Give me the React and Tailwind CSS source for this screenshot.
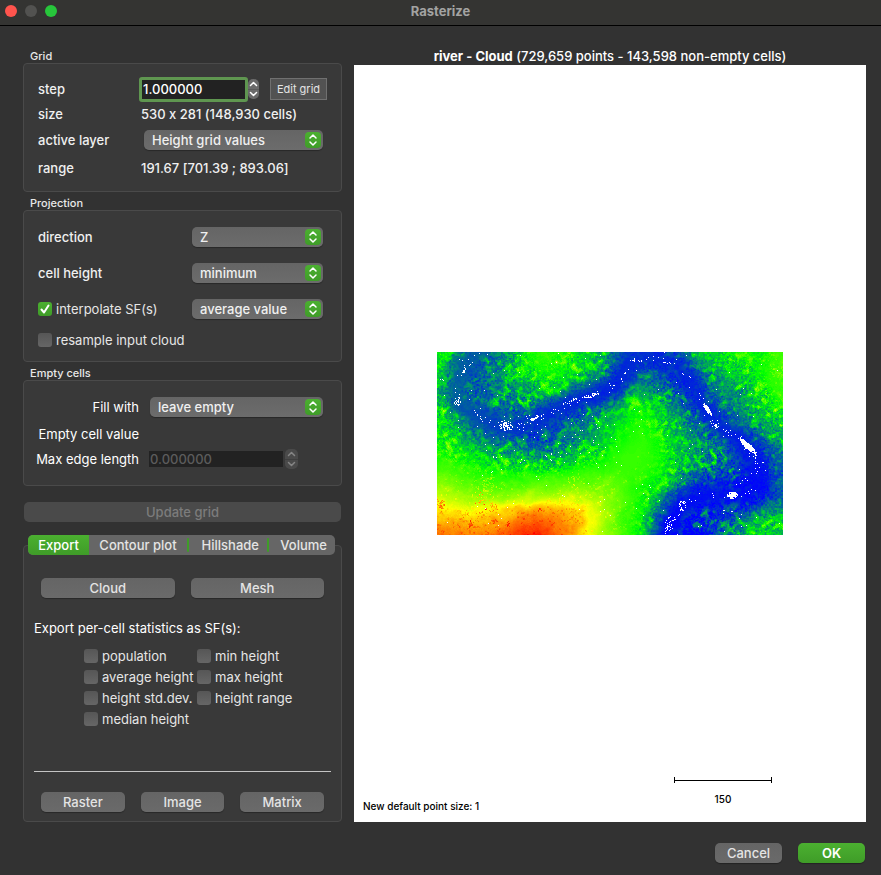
import React, { useId, useMemo, useState } from "react";

/* ---------- Height map ---------- */

const MAP_W = 346;
const MAP_H = 183;
const STEP = 20;

// Coarse terrain heights, one sample every 20 cells: 0 blue, 33 green, 66 yellow, 100 red.
const HEIGHTS = [
  [31, 21, 13, 18, 28, 38, 36, 31, 26, 16, 9, 6, 13, 26, 31, 36, 34, 40, 40],
  [29, 15, 13, 19, 28, 34, 34, 30, 23, 14, 14, 13, 8, 17, 23, 29, 33, 40, 40],
  [26, 16, 14, 17, 20, 25, 25, 20, 16, 14, 26, 19, 13, 12, 20, 22, 29, 37, 38],
  [30, 21, 15, 16, 16, 16, 15, 15, 20, 26, 34, 28, 20, 12, 13, 20, 25, 32, 32],
  [33, 27, 18, 14, 12, 11, 14, 18, 24, 31, 37, 33, 25, 17, 14, 14, 17, 24, 24],
  [35, 34, 29, 24, 22, 18, 20, 26, 30, 37, 40, 36, 28, 21, 17, 12, 10, 17, 18],
  [44, 42, 38, 35, 35, 35, 36, 38, 40, 41, 39, 34, 26, 15, 11, 9, 6, 15, 16],
  [55, 52, 48, 47, 49, 51, 53, 52, 50, 46, 36, 29, 15, 10, 7, 5, 4, 13, 14],
  [71, 69, 68, 71, 76, 78, 77, 72, 60, 44, 36, 22, 9, 5, 7, 11, 19, 22, 24],
  [84, 82, 82, 84, 92, 94, 86, 76, 59, 44, 34, 15, 3, 3, 9, 20, 29, 28, 28],
  [86, 84, 84, 86, 94, 95, 88, 76, 58, 44, 34, 13, 1, 3, 10, 21, 30, 28, 28],
];

// River bed: x, y, height of the bed, half width.
const RIVER = [
  [42, -2, 12, 12], [25, 18, 12, 11], [18, 36, 13, 10], [22, 52, 11, 10], [38, 62, 9, 13],
  [56, 71, 8, 14], [72, 75, 7, 14], [92, 72, 6, 14], [110, 61, 5, 14], [130, 52, 4, 13],
  [155, 44, 3, 13], [172, 37, 4, 14], [184, 26, 4, 14], [191, 12, 5, 14], [204, 6, 5, 14],
  [221, 5, 5, 15], [238, 13, 4, 14], [251, 27, 4, 14], [261, 43, 4, 13], [271, 60, 4, 12],
  [285, 76, 4, 12], [301, 86, 3, 13], [314, 102, 3, 15], [320, 116, 2, 17], [320, 132, 1, 17],
  [310, 142, 1, 14], [295, 143, 1, 14], [271, 142, 2, 13], [248, 152, 1, 15], [236, 164, 0, 15],
  [229, 186, 0, 14],
];

// Tall vegetation: x, y, radius, extra height, density.
const CLUMPS = [
  [3, 151, 6, 22, 0.5], [44, 147, 8, 20, 0.28], [54, 154, 7, 18, 0.3], [33, 172, 3, 16, 0.6],
  [70, 172, 3, 16, 0.5], [102, 156, 3, 18, 0.5], [57, 168, 4, 14, 0.35], [50, 134, 12, 12, 0.32],
  [138, 126, 8, 14, 0.3], [24, 130, 5, 12, 0.25], [150, 100, 14, 12, 0.2], [40, 160, 12, 16, 0.14],
  [212, 70, 5, 8, 0.5], [330, 42, 5, 8, 0.5], [340, 18, 7, 8, 0.5], [128, 158, 16, 7, 0.2],
];

// Cells without points: x, y, half length, half thickness, angle, density.
const GAPS = [
  [270, 57, 8, 2, 0.95, 1], [310, 93, 12, 3, 0.72, 0.9], [317, 101, 4, 1, 0.9, 0.8],
  [295, 143, 6, 4, 0, 0.8], [245, 153, 4, 6, 0, 0.35], [20, 49, 4, 5, 0, 0.4],
  [68, 73, 8, 5, 0.2, 0.45], [97, 66, 7, 2, -0.5, 0.7], [137, 47, 4, 2, 0, 0.5],
  [155, 43, 9, 2, -0.25, 0.5], [197, 8, 1, 2, 0, 0.9], [278, 73, 7, 3, 0.8, 0.25],
  [325, 110, 2, 1, 0, 0.8], [231, 172, 4, 9, 0.2, 0.18], [28, 17, 12, 1, -0.9, 0.3],
];

function hash(x, y, seed) {
  let h = Math.imul(x, 374761393) + Math.imul(y, 668265263) + Math.imul(seed, 362437);
  h = Math.imul(h ^ (h >>> 13), 1274126177);
  h = Math.imul(h ^ (h >>> 15), 2246822519);
  return ((h ^ (h >>> 16)) >>> 0) / 4294967296;
}

const ease = (t) => t * t * (3 - 2 * t);
const mix = (a, b, t) => a + (b - a) * t;

function smoothNoise(x, y, size, seed) {
  const rx = x * 0.82 - y * 0.57 + 400;
  const ry = x * 0.57 + y * 0.82 + 400;
  const gx = Math.floor(rx / size);
  const gy = Math.floor(ry / size);
  const fx = ease(rx / size - gx);
  const fy = ease(ry / size - gy);
  return mix(
    mix(hash(gx, gy, seed), hash(gx + 1, gy, seed), fx),
    mix(hash(gx, gy + 1, seed), hash(gx + 1, gy + 1, seed), fx),
    fy
  );
}

function cubic(a, b, c, d, t) {
  return b + 0.5 * t * (c - a + t * (2 * a - 5 * b + 4 * c - d + t * (3 * (b - c) + d - a)));
}

function sample(row, x) {
  const i = Math.floor(x);
  const at = (k) => row[Math.max(0, Math.min(row.length - 1, k))];
  return cubic(at(i - 1), at(i), at(i + 1), at(i + 2), x - i);
}

function terrain(x, y) {
  const gy = y / STEP;
  const i = Math.floor(gy);
  const at = (k) => sample(HEIGHTS[Math.max(0, Math.min(HEIGHTS.length - 1, k))], x / STEP);
  return cubic(at(i - 1), at(i), at(i + 1), at(i + 2), gy - i);
}

function river(x, y) {
  let best = { d: Infinity, bed: 0, width: 1 };
  for (let i = 0; i < RIVER.length - 1; i++) {
    const [ax, ay, ab, aw] = RIVER[i];
    const [bx, by, bb, bw] = RIVER[i + 1];
    const dx = bx - ax;
    const dy = by - ay;
    const t = Math.max(0, Math.min(1, ((x - ax) * dx + (y - ay) * dy) / (dx * dx + dy * dy)));
    const d = Math.hypot(x - ax - dx * t, y - ay - dy * t);
    if (d < best.d) best = { d, bed: mix(ab, bb, t), width: mix(aw, bw, t) };
  }
  return best;
}

function isGap(x, y, riverDistance) {
  for (const [cx, cy, a, b, angle, density] of GAPS) {
    const dx = x - cx;
    const dy = y - cy;
    const u = (dx * Math.cos(angle) + dy * Math.sin(angle)) / a;
    const v = (-dx * Math.sin(angle) + dy * Math.cos(angle)) / b;
    const q = u * u + v * v;
    if (q < 1 && hash(x, y, 70) < density * (1.4 - q)) return true;
  }
  if (riverDistance < 3 && hash(x, y, 80) < 0.05) return true;
  const belt = y > 60 && y < 112 && x > 40 && x < 180 ? 0.011 : 0.003;
  return hash(x, y, 90) < belt;
}

function heightAt(x, y, r) {
  const wx = x + (smoothNoise(x, y, 9, 21) - 0.5) * 6;
  const wy = y + (smoothNoise(x, y, 9, 22) - 0.5) * 6;
  let h = terrain(wx, wy);
  const wobble = 0.8 + 0.4 * smoothNoise(x, y, 12, 23);
  const pull = Math.exp(-Math.pow(r.d / (r.width * wobble), 2));
  h = mix(h, Math.min(h, r.bed), pull * 0.9);

  const plateau = Math.exp(-(Math.pow((x - 198) / 28, 2) + Math.pow((y - 96) / 44, 2)));
  const slope = h > 32 ? Math.max(0.18, 1 - (h - 32) / 8) : 1;
  const rough = slope * (1 - 0.8 * plateau) * (1 - 0.85 * pull);
  const trees = Math.max(0, smoothNoise(x, y, 4, 1) - 0.52) * 2;
  const patches = smoothNoise(x, y, 14, 2);
  h += (trees * (0.4 + patches) - 0.12) * 22 * rough;
  h += (hash(x >> 1, y >> 1, 3) - 0.5) * 9 * rough;
  h += (hash(x, y, 4) - 0.5) * 10 * rough * (0.4 + patches);
  if (h > 32 && hash(x >> 1, y >> 1, 5) < 0.09 * (1 - plateau) * patches * 2) h += 8 * hash(x, y, 6);

  for (const [cx, cy, radius, extra, density] of CLUMPS) {
    const d = Math.hypot(x - cx, y - cy) / radius;
    if (d < 1.4 && hash(x >> 1, y >> 1, 11) * 0.6 + hash(x, y, 12) * 0.4 < density * (1.5 - d)) {
      h += extra * (0.5 + 0.5 * hash(x, y, 13));
    }
  }
  return Math.max(0, Math.min(100, h));
}

function ramp(t) {
  const c = (v) => Math.round(Math.max(0, Math.min(1, v)) * 255);
  if (t < 33) return `rgb(0,${c(t / 33)},${c(1 - t / 33)})`;
  if (t < 66) return `rgb(${c((t - 33) / 33)},255,0)`;
  return `rgb(255,${c(1 - (t - 66) / 34)},0)`;
}

function buildLayers() {
  const layers = new Map();
  for (let y = 0; y < MAP_H; y++) {
    let start = 0;
    let current = null;
    for (let x = 0; x <= MAP_W; x++) {
      let level = null;
      if (x < MAP_W) {
        const r = river(x, y);
        level = isGap(x, y, r.d) ? -1 : Math.round(heightAt(x, y, r));
      }
      if (level !== current) {
        if (current !== null && current !== -1) {
          if (!layers.has(current)) layers.set(current, []);
          layers.get(current).push(`M${start} ${y}h${x - start}v1h${start - x}z`);
        }
        current = level;
        start = x;
      }
    }
  }
  return [...layers].map(([level, runs]) => ({ level, d: runs.join("") }));
}

function HeightMap() {
  const layers = useMemo(buildLayers, []);
  return (
    <svg
      width={MAP_W}
      height={MAP_H}
      viewBox={`0 0 ${MAP_W} ${MAP_H}`}
      shapeRendering="crispEdges"
      role="img"
      aria-label="Height grid"
    >
      {layers.map(({ level, d }) => (
        <path key={level} d={d} fill={ramp(level)} />
      ))}
    </svg>
  );
}

/* ---------- Controls ---------- */

function Select({ label, value, className = "" }) {
  return (
    <div className={`relative h-5 ${className}`}>
      <select
        aria-label={label}
        defaultValue={value}
        className="block h-5 w-full appearance-none rounded-[5px] bg-linear-to-b from-[#656565] to-[#6c6c6c] pl-2 pr-6 text-[13px] leading-5 font-medium text-[#f0f0f0] shadow-[0_1px_1px_rgba(0,0,0,0.3)] outline-none"
      >
        <option>{value}</option>
      </select>
      <span className="pointer-events-none absolute top-0.5 right-0.5 flex size-4 items-center justify-center rounded-[4px] bg-linear-to-b from-[#4bb030] to-[#3f9c28]">
        <svg width="10" height="14" viewBox="0 0 10 14" fill="none" stroke="#fff" strokeWidth="1.5" strokeLinecap="round" strokeLinejoin="round">
          <path d="M2 5l3-3 3 3M2 9l3 3 3-3" />
        </svg>
      </span>
    </div>
  );
}

function Checkbox({ label, defaultChecked = false }) {
  const id = useId();
  const [checked, setChecked] = useState(defaultChecked);
  return (
    <div className="flex items-center gap-1">
      <span className="relative block size-3.5 shrink-0">
        <input
          id={id}
          type="checkbox"
          checked={checked}
          onChange={(e) => setChecked(e.target.checked)}
          className="block size-3.5 appearance-none rounded-[3px] bg-linear-to-b from-[#565656] to-[#666666] checked:from-[#4bb030] checked:to-[#3f9c28]"
        />
        {checked && (
          <svg className="pointer-events-none absolute inset-0" width="14" height="14" viewBox="0 0 14 14" fill="none" stroke="#fff" strokeWidth="2" strokeLinecap="round" strokeLinejoin="round">
            <path d="M3.500 7.500l2.500 3 4.500-7" />
          </svg>
        )}
      </span>
      <label htmlFor={id} className="font-normal whitespace-nowrap text-[#e6e6e6]">{label}</label>
    </div>
  );
}

function Stepper({ disabled = false, className = "" }) {
  const tone = disabled ? "bg-[#4a4a4a] text-[#858585]" : "bg-[#6a6a6a] text-white";
  return (
    <div className={`flex h-5 flex-col overflow-hidden rounded-[5px] ${tone} ${className}`}>
      <button type="button" aria-label="Increase" disabled={disabled} className="flex flex-1 items-center justify-center">
        <svg width="9" height="6" viewBox="0 0 9 6" fill="none" stroke="currentColor" strokeWidth="1.5" strokeLinecap="round" strokeLinejoin="round">
          <path d="M1.500 4.500l3-3 3 3" />
        </svg>
      </button>
      <button type="button" aria-label="Decrease" disabled={disabled} className="flex flex-1 items-center justify-center border-t border-black/15">
        <svg width="9" height="6" viewBox="0 0 9 6" fill="none" stroke="currentColor" strokeWidth="1.5" strokeLinecap="round" strokeLinejoin="round">
          <path d="M1.500 1.500l3 3 3-3" />
        </svg>
      </button>
    </div>
  );
}

function Button({ children, className = "" }) {
  return (
    <button
      type="button"
      className={`h-5 rounded-[5px] bg-linear-to-b from-[#656565] to-[#6a6a6a] text-[13px] leading-5 font-medium text-[#e4e4e4] shadow-[0_1px_1px_rgba(0,0,0,0.3)] ${className}`}
    >
      {children}
    </button>
  );
}

function Group({ title, children, className = "" }) {
  return (
    <section>
      <h2 className="px-[7px] text-[11px] leading-[14px] font-medium text-[#e8e8e8]">{title}</h2>
      <div className={`rounded-[4px] border border-[#4a4a4a] bg-[#393939] px-3.5 ${className}`}>{children}</div>
    </section>
  );
}

const TABS = [
  { name: "Export", style: "w-[61px]" },
  { name: "Contour plot", style: "w-[98px]" },
  { name: "Hillshade", style: "w-20" },
  { name: "Volume", style: "flex-1" },
];

function Tabs() {
  return (
    <div role="tablist" className="relative mt-[13px] mr-[7px] ml-[5px] flex h-5 overflow-hidden rounded-[5px] bg-[#666666]">
      {TABS.map(({ name, style }, i) => (
        <button
          key={name}
          type="button"
          role="tab"
          aria-selected={i === 0}
          className={`flex items-center justify-center whitespace-nowrap ${style} ${
            i === 0 ? "bg-linear-to-b from-[#4bb030] to-[#3f9c28] text-white" : "text-[#e4e4e4]"
          }`}
        >
          {i > 1 && <span className="mr-auto h-3.5 w-0.5 rounded-full bg-[#3f9c28]" />}
          <span className={i > 1 ? "pr-2" : ""}>{name}</span>
        </button>
      ))}
    </div>
  );
}

/* ---------- Panels ---------- */

function Sidebar() {
  return (
    <div className="flex w-[319px] shrink-0 flex-col gap-1 pt-[23px]">
      <Group title="Grid" className="pt-3 pb-[9px]">
        <div className="flex h-[26px] items-center">
          <label htmlFor="step" className="w-[101px]">step</label>
          <input
            id="step"
            defaultValue="1.000000"
            className="h-[25px] w-[109px] rounded-[3px] border-[3px] border-[#5f9650] bg-[#222222] px-px text-[13px] font-medium text-white outline-none"
          />
          <Stepper className="w-[11px]" />
          <button type="button" className="ml-auto h-[22px] w-[57px] border border-[#707070] bg-[#525252] text-[11px] font-normal whitespace-nowrap text-[#e4e4e4]">
            Edit grid
          </button>
        </div>
        <div className="flex h-6 items-center">
          <span className="w-[103px]">size</span>
          <span>530 x 281 (148,930 cells)</span>
        </div>
        <div className="flex h-7 items-center">
          <span className="w-[106px]">active layer</span>
          <Select label="active layer" value="Height grid values" className="mr-1 flex-1" />
        </div>
        <div className="flex h-7 items-center">
          <span className="w-[103px]">range</span>
          <span>191.67 [701.39 ; 893.06]</span>
        </div>
      </Group>

      <Group title="Projection" className="py-2">
        <div className="flex h-9 items-center justify-between">
          <span>direction</span>
          <Select label="direction" value="Z" className="mr-1 w-[131px]" />
        </div>
        <div className="flex h-9 items-center justify-between">
          <span>cell height</span>
          <Select label="cell height" value="minimum" className="mr-1 w-[131px]" />
        </div>
        <div className="flex h-9 items-center justify-between">
          <Checkbox label="interpolate SF(s)" defaultChecked />
          <Select label="interpolation" value="average value" className="mr-1 w-[131px]" />
        </div>
        <div className="flex h-[26px] items-center">
          <Checkbox label="resample input cloud" />
        </div>
      </Group>

      <Group title="Empty cells" className="pt-3 pb-3.5">
        <div className="flex h-7 items-center">
          <span className="flex w-[101px] justify-end font-normal text-white">Fill with</span>
          <Select label="Fill with" value="leave empty" className="mr-1 ml-[11px] flex-1" />
        </div>
        <div className="flex h-[26px] items-center">
          <span className="flex w-[101px] justify-end font-normal whitespace-nowrap text-white">Empty cell value</span>
        </div>
        <div className="flex h-6 items-center">
          <label htmlFor="edge" className="flex w-[101px] justify-end font-normal whitespace-nowrap text-white">Max edge length</label>
          <input
            id="edge"
            disabled
            defaultValue="0.000000"
            className="ml-2.5 h-4 w-[134px] bg-[#222222] px-px text-[13px] font-medium text-[#5c5c5c]"
          />
          <Stepper disabled className="ml-0.5 w-[13px]" />
        </div>
      </Group>

      <button type="button" disabled className="mx-px mt-3 h-5 rounded-[5px] bg-[#4a4a4a] leading-5 text-[#7c7c7c]">
        Update grid
      </button>

      <div className="-mt-1 flex flex-1 flex-col">
        <Tabs />
        <div role="tabpanel" className="-mt-2.5 flex flex-1 flex-col rounded-[4px] border border-[#4a4a4a] bg-[#393939] px-2.5 pt-8 pb-[9px]">
          <div className="flex gap-4 px-[7px]">
            <Button className="flex-1">Cloud</Button>
            <Button className="flex-1">Mesh</Button>
          </div>
          <p className="mt-5 leading-5 font-normal text-white">Export per-cell statistics as SF(s):</p>
          <div className="mt-[7px] grid auto-rows-[21px] grid-cols-[113px_113px] items-center pl-[50px]">
            <Checkbox label="population" />
            <Checkbox label="min height" />
            <Checkbox label="average height" />
            <Checkbox label="max height" />
            <Checkbox label="height std.dev." />
            <Checkbox label="height range" />
            <Checkbox label="median height" />
          </div>
          <hr className="mt-auto border-t border-[#c4c4c4]" />
          <div className="mt-5 flex gap-4 px-[7px]">
            <Button className="flex-1">Raster</Button>
            <Button className="flex-1">Image</Button>
            <Button className="flex-1">Matrix</Button>
          </div>
        </div>
      </div>
    </div>
  );
}

function Viewport() {
  return (
    <div className="flex min-w-0 flex-1 flex-col pt-[21px]">
      <h2 className="h-[18px] text-center leading-[18px] whitespace-nowrap text-white">
        <b className="font-bold">river - Cloud</b> (729,659 points - 143,598 non-empty cells)
      </h2>
      <div className="relative flex flex-1 items-center justify-center bg-white text-[10px] leading-3 text-black">
        <HeightMap />
        <span className="absolute bottom-2.5 left-[9px]">New default point size: 1</span>
        <div className="absolute right-[94px] bottom-[17px] w-[98px] text-center">
          <svg className="mb-[9px] block" width="98" height="7" viewBox="0 0 98 7" shapeRendering="crispEdges">
            <path d="M0 0h1v3h96v-3h1v6h-1v-2h-96v2h-1z" fill="#000" />
          </svg>
          150
        </div>
      </div>
    </div>
  );
}

export default function App() {
  return (
    <div className="flex min-h-screen flex-col bg-[#323232] font-['Inter','Liberation_Sans',sans-serif] text-[13px] leading-4 font-medium text-[#f0f0f0] [font-feature-settings:'calt'_0]">
      <header className="relative flex h-[26px] items-center justify-center border-b border-black bg-[#343432] pb-1">
        <div className="absolute left-[5px] flex gap-2">
          <span className="size-3 rounded-full bg-[#ff544d]" />
          <span className="size-3 rounded-full bg-[#525250]" />
          <span className="size-3 rounded-full bg-[#27c63b]" />
        </div>
        <h1 className="font-bold text-[#a3a3a2]">Rasterize</h1>
      </header>
      <main className="flex flex-1 gap-3 pr-[15px] pl-[23px]">
        <Sidebar />
        <Viewport />
      </main>
      <footer className="flex justify-end gap-4 pt-[21px] pr-4 pb-3">
        <Button className="w-[67px]">Cancel</Button>
        <button type="button" className="h-5 w-[67px] rounded-[5px] bg-linear-to-b from-[#4bb030] to-[#3f9c28] leading-5 font-semibold text-white shadow-[0_1px_1px_rgba(0,0,0,0.3)]">
          OK
        </button>
      </footer>
    </div>
  );
}
